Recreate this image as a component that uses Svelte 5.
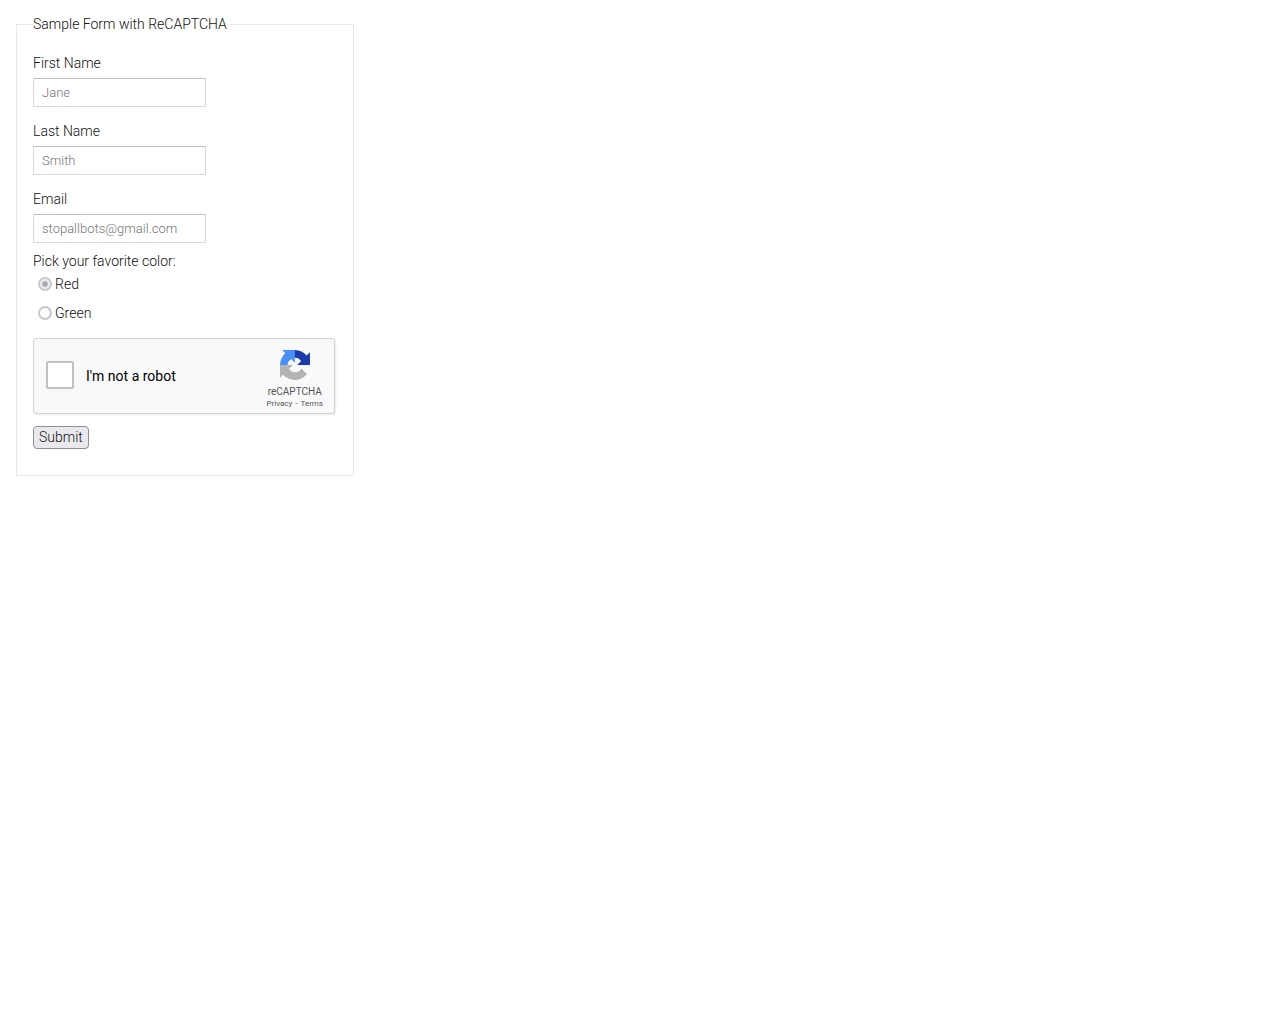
<script>
  let fields = [
    { id: "first-name", label: "First Name", type: "text", placeholder: "Jane" },
    { id: "last-name", label: "Last Name", type: "text", placeholder: "Smith" },
    { id: "email", label: "Email", type: "email", placeholder: "stopallbots@gmail.com" },
  ]

  let colors = ["Red", "Green"]
  let color = "Red"
</script>

<main>
  <form on:submit|preventDefault>
    <fieldset class="sample">
      <legend>Sample Form with ReCAPTCHA</legend>

      <div class="fields">
        {#each fields as field}
          <div class="field">
            <label for={field.id}>{field.label}</label>
            <input id={field.id} type={field.type} placeholder={field.placeholder}>
          </div>
        {/each}
      </div>

      <p id="color-title">Pick your favorite color:</p>
      <div class="colors" role="radiogroup" aria-labelledby="color-title">
        {#each colors as name}
          <label class="radio">
            <input type="radio" name="color" value={name} bind:group={color} disabled>
            {name}
          </label>
        {/each}
      </div>

      <div class="captcha">
        <label class="robot">
          <input type="checkbox">
          I'm not a robot
        </label>
        <div class="brand">
          <svg viewBox="0 0 64 64" width="30" height="30" aria-hidden="true">
            <path fill="#1c3aa9" d="M64 31.955l-.033-1.37V4.687l-7.16 7.16C50.948 4.674 42.033.093 32.05.093c-10.389 0-19.622 4.96-25.458 12.64l11.736 11.86a15.55 15.55 0 0 1 4.754-5.334c2.05-1.6 4.952-2.906 8.968-2.906.485 0 .86.057 1.135.163 4.976.393 9.288 3.14 11.828 7.124l-8.307 8.307L64 31.953"/>
            <path fill="#4a8ef8" d="M31.862.094l-1.37.033H4.594l7.16 7.16C4.58 13.147 0 22.06 0 32.046c0 10.388 4.96 19.622 12.64 25.458L24.5 45.768a15.55 15.55 0 0 1-5.334-4.754c-1.6-2.05-2.906-4.952-2.906-8.968 0-.485.057-.86.163-1.135.393-4.976 3.14-9.288 7.124-11.828l8.307 8.307L31.86.095"/>
            <path fill="#b3b3b3" d="M.001 32.045l.033 1.37v25.898l7.16-7.16c5.86 7.173 14.774 11.754 24.76 11.754 10.388 0 19.622-4.96 25.458-12.64l-11.736-11.86a15.55 15.55 0 0 1-4.754 5.334c-2.05 1.6-4.952 2.906-8.968 2.906-.485 0-.86-.057-1.135-.163-4.976-.393-9.288-3.14-11.828-7.124l8.307-8.307c-10.522.04-22.4.066-27.295-.005"/>
          </svg>
          <div class="name">reCAPTCHA</div>
          <div class="links">
            <a href="#privacy">Privacy</a>
            <span>-</span>
            <a href="#terms">Terms</a>
          </div>
        </div>
      </div>

      <button type="submit">Submit</button>
    </fieldset>
  </form>
</main>

<style>
  :global(body) {
    background: #fff;
    color: #111;
    font-family: Roboto, "Liberation Sans", sans-serif;
    font-size: 14px;
    font-weight: 300;
    line-height: 20px;
  }

  main {
    padding: 14px 16px;
  }

  .sample {
    box-sizing: border-box;
    width: fit-content;
    max-width: 100%;
    margin: 0;
    padding: 19px 18px 26px 16px;
    border: 1px solid #e8e8e8;
  }

  legend {
    padding: 0;
  }

  .fields {
    display: flex;
    flex-direction: column;
    gap: 14px;
    margin-bottom: 8px;
  }

  .field {
    display: flex;
    flex-direction: column;
    align-items: flex-start;
    gap: 5px;
  }

  .field input {
    box-sizing: border-box;
    width: 173px;
    height: 29px;
    padding: 1px 8px;
    border: 1px solid #d9d9d9;
    border-top-color: #c0c0c0;
    background: #fff;
    color: #111;
    font: inherit;
    font-size: 13px;
  }

  .field input::placeholder {
    color: #757575;
  }

  p {
    margin: 0 0 3px;
  }

  .colors {
    display: flex;
    flex-direction: column;
    align-items: flex-start;
    gap: 9px;
    margin-bottom: 15px;
    padding-left: 5px;
  }

  .radio {
    display: flex;
    align-items: center;
    gap: 3px;
  }

  .radio input {
    box-sizing: border-box;
    appearance: none;
    width: 14px;
    height: 14px;
    margin: 0;
    border: 2px solid #c7c7cd;
    border-radius: 50%;
    background: #fff;
  }

  .radio input:checked {
    background: radial-gradient(circle, #a9a9b3 2px, #f4f4f6 4px);
  }

  .captcha {
    box-sizing: border-box;
    display: flex;
    justify-content: space-between;
    width: 302px;
    height: 76px;
    margin-bottom: 12px;
    padding: 0 11px 0 12px;
    border: 1px solid #d3d3d3;
    border-radius: 3px;
    background: #f9f9f9;
    box-shadow: 1px 1px 2px rgba(0, 0, 0, 0.08);
  }

  .robot {
    display: flex;
    align-items: center;
    gap: 12px;
    color: #000;
    font-weight: 400;
  }

  .robot input {
    box-sizing: border-box;
    appearance: none;
    width: 28px;
    height: 28px;
    margin: 0 0 2px;
    border: 2px solid #c1c1c1;
    border-radius: 2px;
    background: #fff;
  }

  .brand {
    display: flex;
    flex-direction: column;
    align-items: center;
    padding-top: 11px;
    color: #555;
    font-weight: 400;
  }

  .name {
    margin-top: 6px;
    font-size: 10px;
    line-height: 12px;
  }

  .links {
    display: flex;
    gap: 3px;
    margin-top: 1px;
    font-size: 8px;
    line-height: 10px;
  }

  .links a {
    color: #555;
    text-decoration: none;
  }

  button {
    box-sizing: border-box;
    display: block;
    height: 23px;
    padding: 0 5px 1px;
    border: 1px solid #8f8f9d;
    border-radius: 4px;
    background: #e9e9ed;
    color: #111;
    font: inherit;
  }
</style>
